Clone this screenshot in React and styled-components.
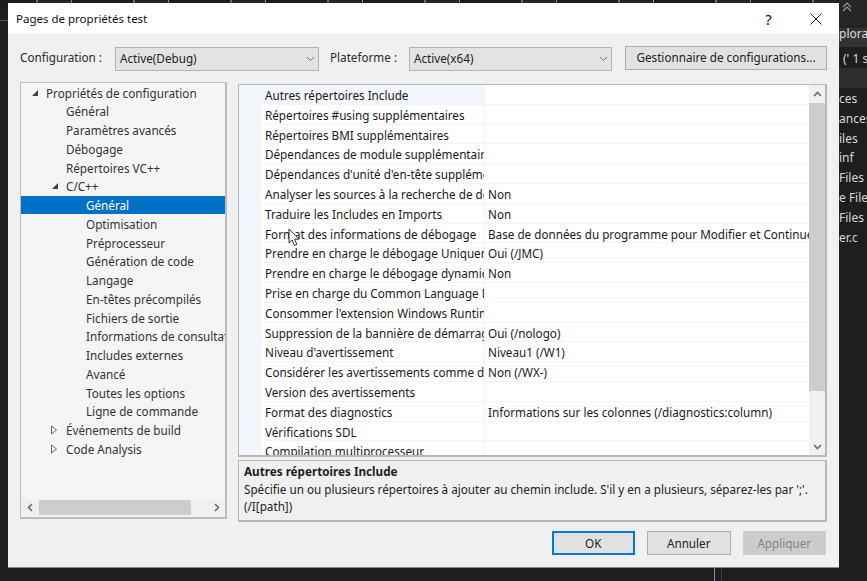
import React from "react";
import styled, { createGlobalStyle } from "styled-components";

const GlobalStyle = createGlobalStyle`
  html, body {
    margin: 0;
    padding: 0;
    background: #1e1e1e;
    overflow: hidden;
  }
  * {
    box-sizing: border-box;
  }
`;

const Desktop = styled.div`
  position: relative;
  width: 867px;
  height: 581px;
  background: #1e1e1e;
  overflow: hidden;
  font-family: "Noto Sans", "Open Sans", sans-serif;
  font-size: 11.7px;
`;

const TopNoise = styled.div`
  height: 3px;
  background: repeating-linear-gradient(90deg, #1c1c1c 0 36px, #6a6a6a 36px 38px, #242424 38px 71px, #8a8a8a 71px 72px, #1c1c1c 72px 97px);
`;

const Main = styled.div`
  display: flex;
  padding-left: 8px;
`;

const Dialog = styled.div`
  width: 831px;
  height: 565px;
  background: #f0f0f0;
  border-bottom: 1px solid #8a8a8a;
  display: flex;
  flex-direction: column;
  color: #1c1c1c;
`;

const TitleBar = styled.div`
  height: 31px;
  background: #fff;
  display: flex;
  align-items: center;
  padding-left: 8px;
  font-size: 11.5px;
  color: #111;
`;

const Title = styled.span`
  flex: 1;
`;

const TitleButton = styled.span`
  width: 47px;
  text-align: center;
  font-size: 15px;
  display: flex;
  justify-content: center;
`;

const Content = styled.div`
  flex: 1;
  padding: 11px 12px 0 12px;
  display: flex;
  flex-direction: column;
`;

const ConfigRow = styled.div`
  display: flex;
  align-items: center;
  height: 26px;
`;

const ConfigLabel = styled.span`
  width: ${(p) => p.$w}px;
  padding-bottom: 2px;
  color: #2b2b2b;
  white-space: nowrap;
`;

const Select = styled.div`
  width: ${(p) => p.$w}px;
  height: 24px;
  margin-top: 1px;
  margin-right: ${(p) => p.$mr}px;
  background: #e3e3e3;
  border: 1px solid #b4b4b4;
  display: flex;
  align-items: center;
  justify-content: space-between;
  padding: 0 3px 1px 4px;
  color: #222;
`;

const WideButton = styled.div`
  width: 202px;
  height: 24px;
  margin-top: -1px;
  padding-bottom: 2px;
  background: #e1e1e1;
  border: 1px solid #adadad;
  display: flex;
  align-items: center;
  justify-content: center;
  color: #222;
`;

const Panels = styled.div`
  display: flex;
  gap: 11px;
  margin-top: 10px;
`;

const TreeBox = styled.div`
  width: 207px;
  height: 437px;
  margin-top: 1px;
  background: #f5f5f5;
  border: 2px solid #bcbcbc;
  border-width: 1px 2px 2px 1px;
  display: flex;
  flex-direction: column;
  justify-content: space-between;
`;

const TreeList = styled.div`
  padding-top: 0;
`;

const TreeRow = styled.div`
  height: 18.75px;
  padding-top: 0.5px;
  line-height: 18.25px;
  display: flex;
  align-items: center;
  padding-left: ${(p) => p.$indent}px;
  white-space: nowrap;
  overflow: hidden;
  color: ${(p) => (p.$selected ? "#fff" : "#333")};
  background: ${(p) => (p.$selected ? "#0071c5" : "transparent")};
`;

const Arrow = styled.span`
  width: ${(p) => p.$w}px;
  flex: none;
  display: flex;
  align-items: center;
`;

const HScroll = styled.div`
  height: 17px;
  display: flex;
  align-items: center;
  background: #f0f0f0;
  margin-bottom: 1px;
`;

const ScrollEnd = styled.span`
  width: ${(p) => p.$size}px;
  height: ${(p) => p.$size}px;
  flex: none;
  display: flex;
  align-items: center;
  justify-content: center;
  align-self: center;
`;

const HThumb = styled.div`
  width: 152px;
  height: 15px;
  background: #cdcdcd;
`;

const Spacer = styled.div`
  flex: 1;
`;

const RightColumn = styled.div`
  width: 589px;
  margin-top: 3px;
  display: flex;
  flex-direction: column;
  gap: 3px;
`;

const GridBox = styled.div`
  height: 373px;
  background: #fff;
  border: 1px solid #b8b8b8;
  border-width: 1px 2px 2px 1px;
  display: flex;
  overflow: hidden;
`;

const GridRows = styled.div`
  flex: 1;
  overflow: hidden;
`;

const GridRow = styled.div`
  height: 19.8px;
  display: flex;
  border-bottom: 1px solid #f3f5fb;
  background: #fff;
`;

const Gutter = styled.div`
  width: 22px;
  flex: none;
  background: #f3f6fc;
`;

const NameCell = styled.div`
  width: 224px;
  flex: none;
  padding: 1px 0 0 4px;
  line-height: 18.8px;
  white-space: nowrap;
  overflow-x: clip;
  color: #1a1a1a;
  border-right: 1px solid #f3f5fb;
  background: ${(p) => (p.$active ? "#f3f6fc" : "#fff")};
`;

const ValueCell = styled.div`
  flex: 1;
  padding: 1px 0 0 3px;
  line-height: 18.8px;
  white-space: nowrap;
  overflow-x: clip;
  color: #1a1a1a;
`;

const VScroll = styled.div`
  width: 16px;
  flex: none;
  background: #f0f0f0;
  display: flex;
  flex-direction: column;
`;

const VThumb = styled.div`
  height: 288px;
  background: #cdcdcd;
`;

const DescBox = styled.div`
  height: 62px;
  border: 1px solid #b8b8b8;
  border-width: 1px 2px 2px 1px;
  padding: 1px 5px;
  line-height: 16.5px;
  white-space: nowrap;
  color: #222;
`;

const DescTitle = styled.div`
  font-weight: 700;
  margin-bottom: 1px;
  line-height: 18px;
`;

const Footer = styled.div`
  display: flex;
  justify-content: flex-end;
  gap: 12px;
  margin-top: 9px;
  padding-right: 1px;
`;

const FootButton = styled.div`
  width: 83.5px;
  height: 24px;
  display: flex;
  align-items: center;
  justify-content: center;
  background: ${(p) => (p.$disabled ? "#cccccc" : "#e1e1e1")};
  border: ${(p) => (p.$primary ? "2px solid #0078d7" : p.$disabled ? "1px solid #cccccc" : "1px solid #adadad")};
  color: ${(p) => (p.$disabled ? "#838383" : "#222")};
`;

const SidePanel = styled.div`
  flex: 1;
  height: 578px;
  margin-top: -3px;
  overflow: hidden;
  color: #d6d6d6;
  white-space: nowrap;
  display: flex;
  flex-direction: column;
  font-size: 12px;
`;

const SideHead = styled.div`
  height: 28px;
  background: #252525;
  padding-left: 2px;
`;

const SideTab = styled.div`
  height: 19px;
  line-height: 11px;
  background: #333;
  color: #ddd;
  overflow: hidden;
`;

const SideBar = styled.div`
  height: 21px;
  line-height: 24px;
  padding-left: 4px;
  background: #1e1e1e;
`;

const SideGap = styled.div`
  height: 20px;
  background: #2d2d2d;
`;

const SideItems = styled.div`
  padding-top: 1px;
`;

const SideItem = styled.div`
  height: 19.8px;
  line-height: 19.8px;
`;

const Cursor = styled.svg`
  position: absolute;
  left: 288px;
  top: 228px;
`;

const BottomLine = styled.div`
  position: absolute;
  left: ${(p) => p.$x}px;
  top: 568px;
  width: 1px;
  height: 13px;
  background: ${(p) => p.$color};
`;

const EdgeLine = styled.div`
  position: absolute;
  left: 0;
  top: 20px;
  width: 8px;
  height: 1px;
  background: #555;
`;

const Chevron = ({ dir = "down", color = "#6a6a6a", thin = false }) => {
  const paths = {
    down: "M1 3l3.5 3.5L8 3",
    up: "M1 6l3.5-3.5L8 6",
    left: "M6 1L2.500 4.500 6 8",
    right: "M3 1l3.500 3.500L3 8",
  };
  return (
    <svg width="9" height="9" viewBox="0 0 9 9" fill="none">
      <path d={paths[dir]} stroke={color} strokeWidth={thin ? 1 : 1.6} />
    </svg>
  );
};

const TreeArrow = ({ open }) =>
  open ? (
    <svg width="8" height="8" viewBox="0 0 8 8">
      <path d="M7 1v6H1z" fill="#444" />
    </svg>
  ) : (
    <svg width="8" height="10" viewBox="0 0 8 10">
      <path d="M1.500 1l5 4-5 4z" fill="#fff" stroke="#666" />
    </svg>
  );

const tree = [
  { label: "Propriétés de configuration", indent: 10, arrow: "open", w: 15 },
  { label: "Général", indent: 45 },
  { label: "Paramètres avancés", indent: 45 },
  { label: "Débogage", indent: 45 },
  { label: "Répertoires VC++", indent: 45 },
  { label: "C/C++", indent: 30, arrow: "open", w: 15 },
  { label: "Général", indent: 65, selected: true },
  { label: "Optimisation", indent: 65 },
  { label: "Préprocesseur", indent: 65 },
  { label: "Génération de code", indent: 65 },
  { label: "Langage", indent: 65 },
  { label: "En-têtes précompilés", indent: 65 },
  { label: "Fichiers de sortie", indent: 65 },
  { label: "Informations de consultation", indent: 65 },
  { label: "Includes externes", indent: 65 },
  { label: "Avancé", indent: 65 },
  { label: "Toutes les options", indent: 65 },
  { label: "Ligne de commande", indent: 65 },
  { label: "Événements de build", indent: 29, arrow: "closed", w: 16 },
  { label: "Code Analysis", indent: 29, arrow: "closed", w: 16 },
];

const rows = [
  ["Autres répertoires Include", ""],
  ["Répertoires #using supplémentaires", ""],
  ["Répertoires BMI supplémentaires", ""],
  ["Dépendances de module supplémentaires", ""],
  ["Dépendances d'unité d'en-tête supplémentaires", ""],
  ["Analyser les sources à la recherche de dépendances", "Non"],
  ["Traduire les Includes en Imports", "Non"],
  ["Format des informations de débogage", "Base de données du programme pour Modifier et Continuer (/ZI)"],
  ["Prendre en charge le débogage Uniquement mon code", "Oui (/JMC)"],
  ["Prendre en charge le débogage dynamique", "Non"],
  ["Prise en charge du Common Language Runtime", ""],
  ["Consommer l'extension Windows Runtime", ""],
  ["Suppression de la bannière de démarrage", "Oui (/nologo)"],
  ["Niveau d'avertissement", "Niveau1 (/W1)"],
  ["Considérer les avertissements comme des erreurs", "Non (/WX-)"],
  ["Version des avertissements", ""],
  ["Format des diagnostics", "Informations sur les colonnes (/diagnostics:column)"],
  ["Vérifications SDL", ""],
  ["Compilation multiprocesseur", ""],
];

const sideItems = ["ces", "ances", "iles", "inf", "Files", "e Files", "Files", "er.c"];

const App = () => {
  return (
    <Desktop>
      <GlobalStyle />
      <TopNoise />
      <Main>
        <Dialog>
          <TitleBar>
            <Title>Pages de propriétés test</Title>
            <TitleButton>?</TitleButton>
            <TitleButton>
              <svg width="12" height="12" viewBox="0 0 12 12">
                <path d="M.5.5l11 11M11.500.5l-11 11" stroke="#222" strokeWidth="1" />
              </svg>
            </TitleButton>
          </TitleBar>
          <Content>
            <ConfigRow>
              <ConfigLabel $w={95}>Configuration :</ConfigLabel>
              <Select $w={204} $mr={11}>
                Active(Debug)
                <Chevron color="#7a7a7a" thin />
              </Select>
              <ConfigLabel $w={79}>Plateforme :</ConfigLabel>
              <Select $w={203} $mr={13}>
                Active(x64)
                <Chevron color="#7a7a7a" thin />
              </Select>
              <WideButton>Gestionnaire de configurations...</WideButton>
            </ConfigRow>
            <Panels>
              <TreeBox>
                <TreeList>
                  {tree.map((item, i) => (
                    <TreeRow key={i} $indent={item.indent} $selected={item.selected}>
                      {item.arrow && (
                        <Arrow $w={item.w}>
                          <TreeArrow open={item.arrow === "open"} />
                        </Arrow>
                      )}
                      {item.label}
                    </TreeRow>
                  ))}
                </TreeList>
                <HScroll>
                  <ScrollEnd $size={18}>
                    <Chevron dir="left" />
                  </ScrollEnd>
                  <HThumb />
                  <Spacer />
                  <ScrollEnd $size={18}>
                    <Chevron dir="right" />
                  </ScrollEnd>
                </HScroll>
              </TreeBox>
              <RightColumn>
                <GridBox>
                  <GridRows>
                    {rows.map(([name, value], i) => (
                      <GridRow key={i}>
                        <Gutter />
                        <NameCell $active={i === 0}>{name}</NameCell>
                        <ValueCell>{value}</ValueCell>
                      </GridRow>
                    ))}
                  </GridRows>
                  <VScroll>
                    <ScrollEnd $size={18}>
                      <Chevron dir="up" />
                    </ScrollEnd>
                    <VThumb />
                    <Spacer />
                    <ScrollEnd $size={17}>
                      <Chevron dir="down" />
                    </ScrollEnd>
                  </VScroll>
                </GridBox>
                <DescBox>
                  <DescTitle>Autres répertoires Include</DescTitle>
                  Spécifie un ou plusieurs répertoires à ajouter au chemin include. S'il y en a plusieurs, séparez-les par ';'.
                  <br />
                  (/I[path])
                </DescBox>
              </RightColumn>
            </Panels>
            <Footer>
              <FootButton $primary>OK</FootButton>
              <FootButton>Annuler</FootButton>
              <FootButton $disabled>Appliquer</FootButton>
            </Footer>
          </Content>
        </Dialog>
        <SidePanel>
          <SideHead>
            <svg width="12" height="12" viewBox="0 0 12 12" fill="none">
              <path d="M2 6l4-4 4 4M2 10l4-4 4 4" stroke="#9a9a9a" strokeWidth="1.2" />
            </svg>
          </SideHead>
          <SideTab>plorat</SideTab>
          <SideBar>(' 1 s</SideBar>
          <SideGap />
          <SideItems>
            {sideItems.map((s, i) => (
              <SideItem key={i}>{s}</SideItem>
            ))}
          </SideItems>
        </SidePanel>
      </Main>
      <EdgeLine />
      <Cursor width="13" height="20" viewBox="0 0 13 20">
        <path d="M1 1v14l3.200-3 2.300 5.500 2.400-1L6.600 11.200H11z" fill="#fff" stroke="#333" strokeWidth="1" />
      </Cursor>
      <BottomLine $x={714} $color="#8a7fc4" />
      <BottomLine $x={721} $color="#3a3a3a" />
    </Desktop>
  );
};

export default App;
